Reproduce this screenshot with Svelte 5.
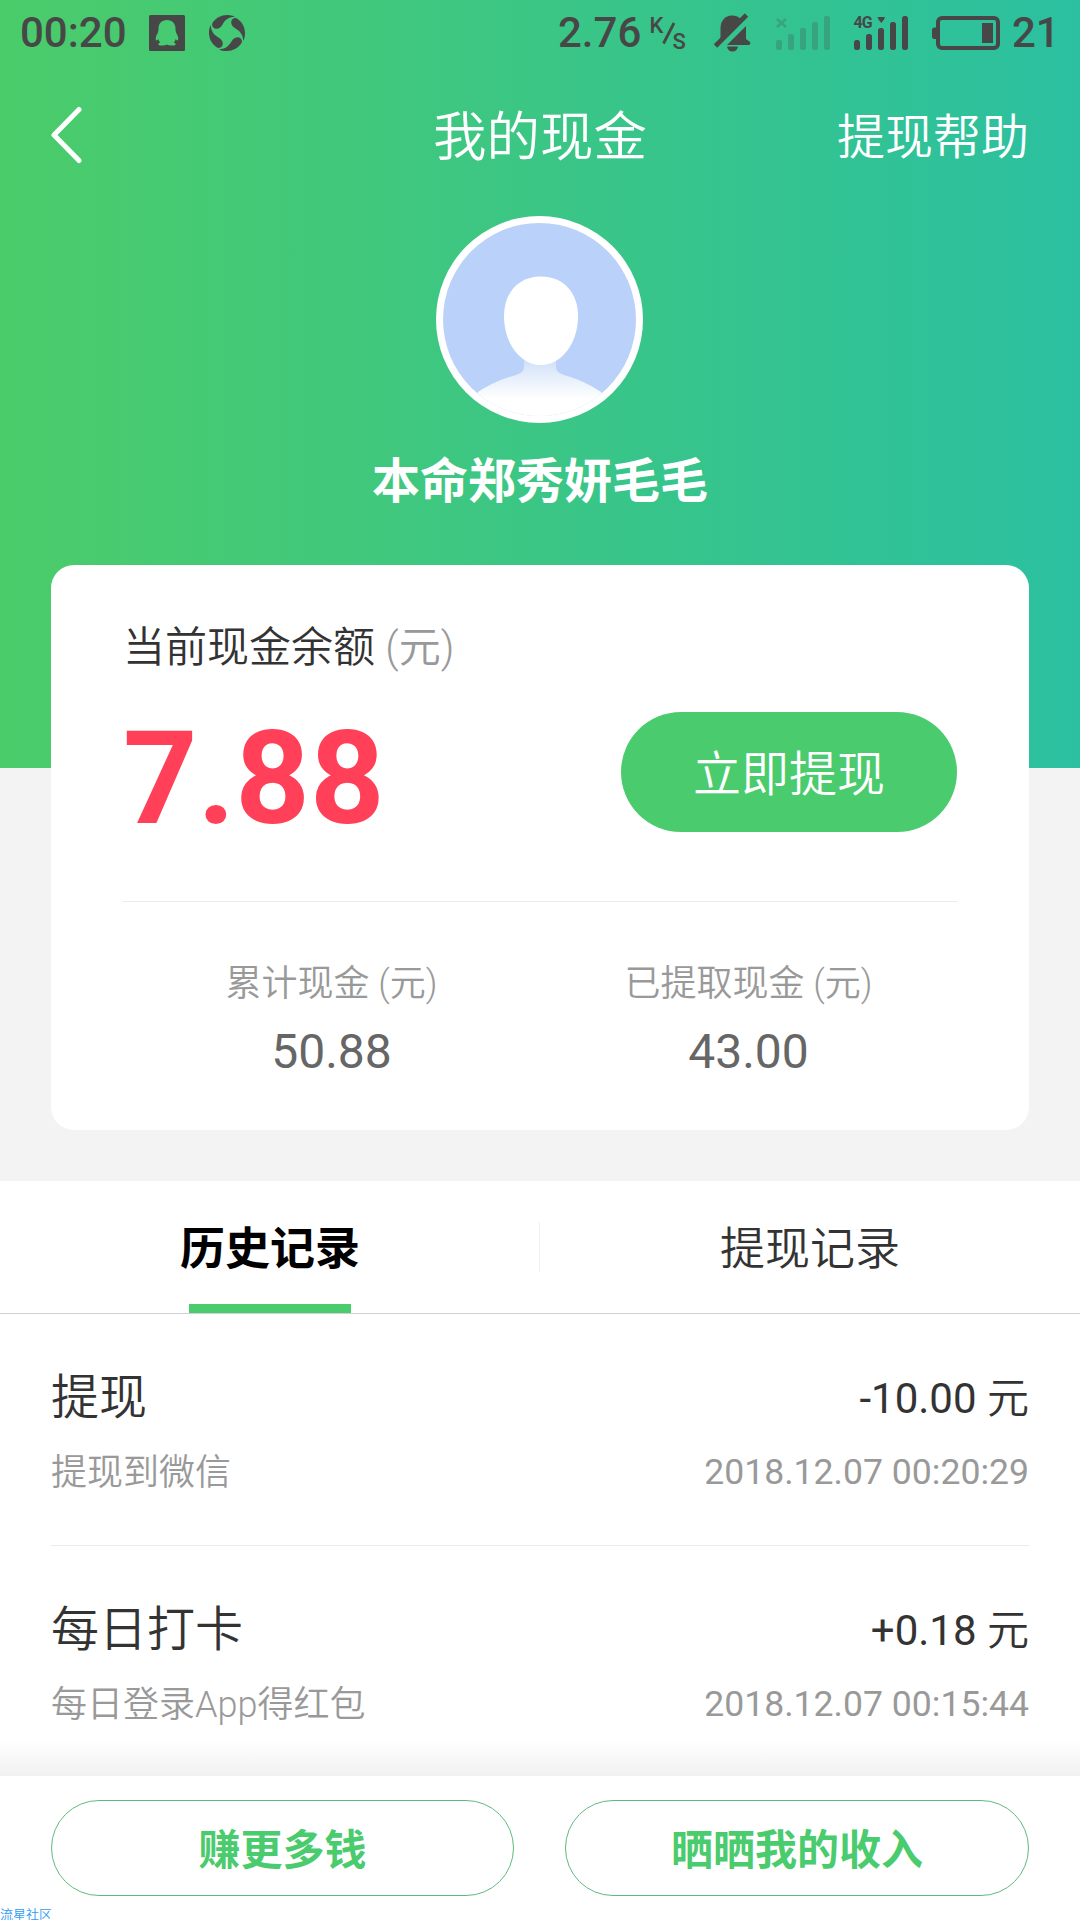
<script lang="ts">
  const stats = [
    { label: '累计现金 (元)', value: '50.88' },
    { label: '已提取现金 (元)', value: '43.00' }
  ]

  const records = [
    { title: '提现', amount: '-10.00', note: '提现到微信', time: '2018.12.07 00:20:29' },
    { title: '每日打卡', amount: '+0.18', note: '每日登录App得红包', time: '2018.12.07 00:15:44' }
  ]

  const bars = [0, 1, 2, 3, 4]

  let tab = $state('history')
</script>


<div class="page">
  <header class="hero">
    <div class="status">
      <span class="clock">00:20</span>
      <svg class="qq" width="36" height="36" viewBox="0 0 36 36">
        <rect width="36" height="36" rx="1.5" fill="#474747" />
        <path
          d="M18 5C12.500 5 9.500 9 9.500 13.500C9.500 16 9 17 8.500 18.500C7 21 6.200 23.500 7 25.200C7.500 26 8.700 25 9.300 24C9.600 25.500 10.300 26.600 11.200 27.500C9.500 28 9 29 9.500 29.700C11 31 16 30.700 18 29.500C20 30.700 25 31 26.500 29.700C27 29 26.500 28 24.800 27.500C25.700 26.600 26.400 25.500 26.700 24C27.300 25 28.500 26 29 25.200C29.800 23.500 29 21 27.500 18.500C27 17 26.500 16 26.500 13.500C26.500 9 23.500 5 18 5Z"
          fill="#47ca71"
        />
      </svg>
      <svg class="swirl" width="36" height="36" viewBox="0 0 36 36" fill="#474747">
        {#each [0, 90, 180, 270] as angle}
          <path
            transform="rotate({angle} 18 18)"
            d="M26 1.600C19 -1.500 9 -0.500 3.500 8C2 11 4.500 14 7.500 13.800C10.500 13.600 12 12 13.500 9.500C16 5.500 18.500 2.300 26 1.600Z"
          />
        {/each}
      </svg>
      <span class="speed">2.76</span>
      <svg class="unit" width="38" height="36" viewBox="0 0 38 36" fill="#474747">
        <text x="-0.500" y="17.500" class="unit-text">K</text>
        <path d="M13.500 28.500L24 8" stroke="#474747" stroke-width="2.800" />
        <text x="22.500" y="33.500" class="unit-text">S</text>
      </svg>
      <svg class="bell" width="38" height="40" viewBox="0 0 38 40" fill="#474747">
        <path d="M7.500 26V15C7.500 8 12 2.500 19 2.500C23 2.500 26 4 28 6.500L8.500 26Z" />
        <path d="M33 13V26L37 29C38 30.500 37 32 35.500 32H14Z" />
        <path d="M14 33.500H25C24.500 36.500 22.500 38.500 19.500 38.500C16.500 38.500 14.500 36.500 14 33.500Z" />
        <path d="M2.500 33L33.500 2" stroke="#474747" stroke-width="4.800" />
      </svg>
      <svg class="signal off" width="54" height="36" viewBox="0 0 54 36" fill="#474747">
        <path d="M1 4L10 12M10 4L1 12" stroke="#474747" stroke-width="2.400" />
        {#each bars as i}
          <rect x={i * 12} y={25 - i * 6} width="6" height={10 + i * 6} rx="2" />
        {/each}
      </svg>
      <svg class="signal" width="54" height="36" viewBox="0 0 54 36" fill="#474747">
        <text x="-0.500" y="13" class="net">4G</text>
        <path d="M23.500 2H31L30 4.500L27.300 8L24.500 4.500Z" />
        {#each bars as i}
          <rect x={i * 12} y={25 - i * 6} width="6" height={10 + i * 6} rx="2.500" />
        {/each}
      </svg>
      <svg class="battery" width="68" height="34" viewBox="0 0 68 34" fill="#474747">
        <path d="M5 11.500H2.500Q0 11.500 0 14V20.500Q0 23 2.500 23H5Z" />
        <rect x="6" y="2" width="60" height="30" rx="4" fill="none" stroke="#474747" stroke-width="4" />
        <rect x="50" y="7" width="11" height="20" />
      </svg>
      <span class="level">21</span>
    </div>

    <nav class="nav">
      <svg class="back" width="34" height="60" viewBox="0 0 34 60">
        <path
          d="M30 3.500L5 29L30 54.500"
          fill="none"
          stroke="#fff"
          stroke-width="5"
          stroke-linecap="round"
          stroke-linejoin="round"
        />
      </svg>
      <h1>我的现金</h1>
      <span class="help">提现帮助</span>
    </nav>

    <div class="user">
      <svg class="avatar" width="207" height="207" viewBox="0 0 207 207">
        <defs>
          <linearGradient id="body" x1="0" y1="0" x2="0" y2="1">
            <stop offset="0" stop-color="#c8daf7" />
            <stop offset="0.300" stop-color="#e3edfa" />
            <stop offset="0.650" stop-color="#fff" />
          </linearGradient>
          <clipPath id="face"><circle cx="103.500" cy="103.500" r="96.500" /></clipPath>
        </defs>
        <circle cx="103.500" cy="103.500" r="103.500" fill="#fff" />
        <g clip-path="url(#face)">
          <rect width="207" height="207" fill="#bad1f9" />
          <path
            d="M88 138V150C88 156 85 157 80 159C65 163 54 168 42 176L20 207H190L165 176C153 168 142 163 128 159C123 157 120 156 120 150V138Z"
            fill="url(#body)"
          />
          <path
            d="M105 60.500C128 60.500 142 77 142 100C142 128 125 149 105 149C85 149 68 128 68 100C68 77 82 60.500 105 60.500Z"
            fill="#fff"
          />
        </g>
      </svg>
      <p class="name">本命郑秀妍毛毛</p>
    </div>
  </header>

  <section class="card">
    <p class="label">当前现金余额 <span>(元)</span></p>
    <div class="balance">
      <strong>7.88</strong>
      <button class="withdraw">立即提现</button>
    </div>
    <div class="stats">
      {#each stats as stat}
        <div class="stat">
          <p class="stat-label">{stat.label}</p>
          <p class="stat-value">{stat.value}</p>
        </div>
      {/each}
    </div>
  </section>

  <main class="history">
    <div class="tabs">
      <button class="tab" class:active={tab === 'history'} onclick={() => (tab = 'history')}>
        历史记录
      </button>
      <i class="split"></i>
      <button class="tab" class:active={tab === 'withdraw'} onclick={() => (tab = 'withdraw')}>
        提现记录
      </button>
    </div>
    <ul>
      {#each records as record}
        <li>
          <div class="line">
            <span class="title">{record.title}</span>
            <span class="amount">{record.amount} <span class="yuan">元</span></span>
          </div>
          <div class="line small">
            <span class="note">{record.note}</span>
            <span class="time">{record.time}</span>
          </div>
        </li>
      {/each}
    </ul>
  </main>

  <footer class="actions">
    <button>赚更多钱</button>
    <button>晒晒我的收入</button>
    <span class="mark">流星社区</span>
  </footer>
</div>


<style>
  :global(body) {
    margin: 0;
    background: #fff;
  }

  .page {
    position: relative;
    display: flex;
    flex-direction: column;
    width: 1080px;
    height: 1920px;
    overflow: hidden;
    background: #f3f3f3;
    font-family: Roboto, 'Noto Sans CJK SC', sans-serif;
    font-weight: 350;
    color: #333;
  }

  h1,
  p,
  ul {
    margin: 0;
    padding: 0;
    list-style: none;
  }

  button {
    box-sizing: border-box;
    padding: 0;
    border: 0;
    background: none;
    color: inherit;
    font: inherit;
  }

  svg {
    display: block;
    flex: none;
  }

  .hero {
    flex: none;
    height: 768px;
    background: linear-gradient(90deg, #4bcc6a, #2bc0a0);
  }

  .status {
    display: flex;
    align-items: center;
    height: 66px;
    padding: 0 24px 0 20px;
    color: #474747;
    font-size: 42px;
    font-weight: 500;
    line-height: 66px;
  }

  .clock {
    flex: none;
    width: 129px;
  }

  .swirl {
    margin-left: 24px;
  }

  .speed {
    flex: none;
    width: 92px;
    margin-left: 313px;
  }

  .unit {
    overflow: visible;
  }

  .unit-text {
    font-size: 22px;
    font-weight: 500;
  }

  .bell {
    margin-left: 25px;
  }

  .signal {
    margin-left: 24px;
    overflow: visible;
  }

  .signal.off {
    margin-left: 25px;
    opacity: 0.25;
  }

  .net {
    font-size: 16px;
    font-weight: 700;
    letter-spacing: -1px;
  }

  .battery {
    margin-left: 24px;
  }

  .level {
    margin-left: 12px;
  }

  .nav {
    display: grid;
    grid-template-columns: 1fr auto 1fr;
    align-items: center;
    height: 140px;
    padding: 0 51px 0 49px;
    color: #fff;
  }

  h1 {
    padding: 4px 0 0 2px;
    font-size: 53.500px;
    font-weight: 350;
    line-height: 80px;
  }

  .help {
    justify-self: end;
    padding-top: 3px;
    font-size: 48px;
    line-height: 80px;
  }

  .user {
    display: flex;
    flex-direction: column;
    align-items: center;
    padding-top: 10px;
  }

  .avatar {
    margin-right: 1px;
  }

  .name {
    margin-top: 23px;
    color: #fff;
    font-size: 48px;
    font-weight: 700;
    line-height: 72px;
  }

  .card {
    box-sizing: border-box;
    flex: none;
    height: 565px;
    margin: -203px 51px 0;
    padding: 52px 72px 0;
    border-radius: 23px;
    background: #fff;
  }

  .label {
    font-size: 42px;
    line-height: 62px;
  }

  .label span {
    color: #999;
  }

  .balance {
    display: flex;
    align-items: center;
    justify-content: space-between;
    height: 222px;
    border-bottom: 1px solid #ebebeb;
  }

  .balance strong {
    margin-top: -22px;
    color: #ff4058;
    font-size: 130px;
    font-weight: 700;
    line-height: 150px;
  }

  .withdraw {
    width: 336px;
    height: 120px;
    margin-top: -36px;
    padding-bottom: 4px;
    border-radius: 60px;
    background: #4acb6d;
    color: #fff;
    font-size: 48px;
  }

  .stats {
    display: grid;
    grid-template-columns: 1fr 1fr;
    padding-top: 55px;
    text-align: center;
  }

  .stat-label {
    color: #999;
    font-size: 36px;
    line-height: 54px;
  }

  .stat-value {
    margin-top: 5px;
    color: #666;
    font-size: 48px;
    font-weight: 400;
    line-height: 72px;
  }

  .history {
    flex: 1;
    min-height: 0;
    margin-top: 51px;
    overflow: hidden;
    background: #fff;
  }

  .tabs {
    display: flex;
    align-items: stretch;
    height: 132px;
    border-bottom: 1px solid #d0d0d0;
  }

  .tab {
    display: flex;
    flex: 1;
    flex-direction: column;
    align-items: center;
    font-size: 45px;
    line-height: 137px;
  }

  .tab.active {
    color: #000;
    font-weight: 700;
  }

  .tab.active::after {
    content: '';
    flex: none;
    width: 162px;
    height: 9px;
    margin-top: -14px;
    background: #4acb6d;
  }

  .split {
    align-self: center;
    width: 1px;
    height: 50px;
    margin: 0 0 0 -1px;
    background: #f0f0f0;
  }

  li {
    box-sizing: border-box;
    height: 232px;
    margin: 0 51px;
    padding-top: 48px;
    border-bottom: 1px solid #ebebeb;
  }

  li:last-child {
    border-bottom: 0;
  }

  .line {
    display: flex;
    align-items: flex-start;
    justify-content: space-between;
    height: 75px;
    line-height: 72px;
  }

  .title {
    font-size: 48px;
  }

  .amount {
    font-size: 42px;
    font-weight: 400;
    line-height: 74px;
  }

  .yuan {
    font-weight: 350;
  }

  .small {
    color: #999;
    font-size: 36px;
  }

  .time {
    font-size: 35.600px;
    font-weight: 400;
    line-height: 71px;
  }

  .actions {
    position: relative;
    box-sizing: border-box;
    display: grid;
    flex: none;
    grid-template-columns: 463px 464px;
    gap: 51px;
    height: 144px;
    padding: 24px 51px 0;
    background: #fff;
  }

  /* fade above the fixed bar */
  .actions::before {
    content: '';
    position: absolute;
    bottom: 100%;
    left: 0;
    width: 100%;
    height: 36px;
    background: linear-gradient(rgba(0, 0, 0, 0), rgba(0, 0, 0, 0.055));
  }

  .actions button {
    height: 96px;
    padding-bottom: 4px;
    border: 1px solid #5fba7c;
    border-radius: 48px;
    color: #4acb6d;
    font-size: 42px;
    font-weight: 700;
  }

  .mark {
    position: absolute;
    bottom: -3px;
    left: 0;
    color: #2f9bf5;
    font-size: 13px;
    line-height: 16px;
  }
</style>
